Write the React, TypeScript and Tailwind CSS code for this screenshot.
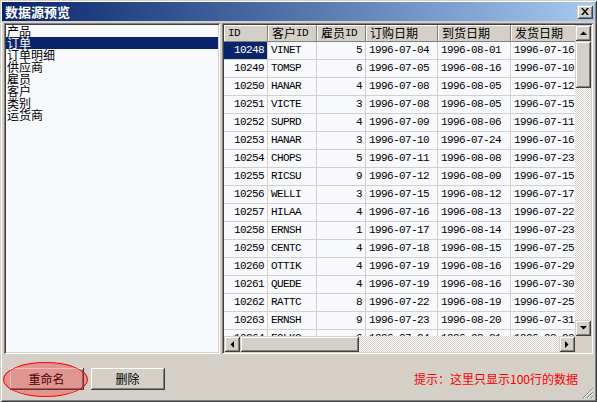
import React from 'react';

const raised = "shadow-[inset_1px_1px_#d4d0c8,inset_-1px_-1px_#404040,inset_2px_2px_#ffffff,inset_-2px_-2px_#808080]";
const sunken = "shadow-[inset_1px_1px_#808080,inset_-1px_-1px_#ffffff,inset_2px_2px_#404040,inset_-2px_-2px_#d4d0c8]";
const checker = "bg-[repeating-conic-gradient(#d4d0c8_0_25%,#ffffff_0_50%)] bg-[length:2px_2px]";

const cjk = { fontFamily: '"Noto Sans CJK SC", "Liberation Sans", sans-serif' };
const mono = { fontFamily: '"Liberation Mono", "Noto Sans CJK SC", monospace' };

const tables = ["产品", "订单", "订单明细", "供应商", "雇员", "客户", "类别", "运货商"];

const rows: [string, string, string, string, string, string][] = [
    ["10248", "VINET", "5", "1996-07-04", "1996-08-01", "1996-07-16"],
    ["10249", "TOMSP", "6", "1996-07-05", "1996-08-16", "1996-07-10"],
    ["10250", "HANAR", "4", "1996-07-08", "1996-08-05", "1996-07-12"],
    ["10251", "VICTE", "3", "1996-07-08", "1996-08-05", "1996-07-15"],
    ["10252", "SUPRD", "4", "1996-07-09", "1996-08-06", "1996-07-11"],
    ["10253", "HANAR", "3", "1996-07-10", "1996-07-24", "1996-07-16"],
    ["10254", "CHOPS", "5", "1996-07-11", "1996-08-08", "1996-07-23"],
    ["10255", "RICSU", "9", "1996-07-12", "1996-08-09", "1996-07-15"],
    ["10256", "WELLI", "3", "1996-07-15", "1996-08-12", "1996-07-17"],
    ["10257", "HILAA", "4", "1996-07-16", "1996-08-13", "1996-07-22"],
    ["10258", "ERNSH", "1", "1996-07-17", "1996-08-14", "1996-07-23"],
    ["10259", "CENTC", "4", "1996-07-18", "1996-08-15", "1996-07-25"],
    ["10260", "OTTIK", "4", "1996-07-19", "1996-08-16", "1996-07-29"],
    ["10261", "QUEDE", "4", "1996-07-19", "1996-08-16", "1996-07-30"],
    ["10262", "RATTC", "8", "1996-07-22", "1996-08-19", "1996-07-25"],
    ["10263", "ERNSH", "9", "1996-07-23", "1996-08-20", "1996-07-31"],
    ["10264", "FOLKO", "6", "1996-07-24", "1996-08-21", "1996-08-23"],
];

function Arrow({ dir }: { dir: "up" | "down" | "left" | "right" }) {
    const pts = {
        up: "0,4 7,4 3.5,0.5",
        down: "0,0 7,0 3.5,3.5",
        left: "4,0 4,7 0.5,3.5",
        right: "0,0 0,7 3.5,3.5",
    }[dir];
    const vertical = dir === "up" || dir === "down";
    return (
        <div className={`w-[16px] h-[16px] shrink-0 bg-[#d4d0c8] flex items-center justify-center ${raised}`}>
            <svg width={vertical ? 7 : 4} height={vertical ? 4 : 7}>
                <polygon points={pts} fill="#000" />
            </svg>
        </div>
    );
}

function HeaderCell({ w, children }: { w: string; children: React.ReactNode }) {
    return (
        <div className={`${w} shrink-0 h-[17px] pl-[4px] flex items-center bg-[#d4d0c8] border-r border-b border-[#808080] shadow-[inset_1px_1px_#ffffff] text-black`}>
            {children}
        </div>
    );
}

export default function App() {
    return (
        <div className="relative w-[597px] h-[402px] bg-[#d4d0c8] p-[2px] flex flex-col shadow-[inset_1px_1px_#d4d0c8,inset_-1px_-1px_#404040,inset_2px_2px_#ffffff,inset_-2px_-2px_#808080] overflow-hidden">
            {/* title bar */}
            <div className="h-[19px] shrink-0 flex items-center justify-between pl-[3px] pr-[2px] bg-linear-to-r from-[#0a246a] to-[#a6caf0]">
                <span className="text-white font-bold text-[13px] leading-none" style={cjk}>数据源预览</span>
                <div className={`w-[16px] h-[14px] bg-[#d4d0c8] flex items-center justify-center ${raised}`}>
                    <svg width="8" height="7" viewBox="0 0 8 7">
                        <path d="M0 0h2l2 2.5L6 0h2L5 3.5 8 7H6L4 4.5 2 7H0l3-3.5z" fill="#000" />
                    </svg>
                </div>
            </div>

            {/* body */}
            <div className="h-[333px] shrink-0 flex gap-[2px] px-[2px] pt-[2px]">
                {/* table list */}
                <div className={`w-[216px] h-[331px] bg-[#f8f9fc] p-[2px] ${sunken}`}>
                    {tables.map((t, i) => (
                        <div
                            key={t}
                            className={`h-[12px] leading-[12px] pl-[1px] text-[12px] whitespace-nowrap ${i === 1 ? "bg-[#0a246a] text-white" : "text-black"}`}
                            style={cjk}
                        >
                            {t}
                        </div>
                    ))}
                </div>

                {/* data grid */}
                <div className={`flex-1 h-[331px] p-[2px] bg-[#d4d0c8] flex flex-col ${sunken}`}>
                    <div className="flex h-[311px]">
                        <div className="w-[351px] h-[311px] overflow-hidden bg-[#f8f9fc] text-[11px] tracking-[-0.6px]" style={mono}>
                            <div className="flex w-[400px]">
                                <HeaderCell w="w-[44px]">ID</HeaderCell>
                                <HeaderCell w="w-[49px]"><span className="text-[12px] tracking-normal" style={cjk}>客户</span>ID</HeaderCell>
                                <HeaderCell w="w-[49px]"><span className="text-[12px] tracking-normal" style={cjk}>雇员</span>ID</HeaderCell>
                                <HeaderCell w="w-[72px]"><span className="text-[12px] tracking-normal" style={cjk}>订购日期</span></HeaderCell>
                                <HeaderCell w="w-[73px]"><span className="text-[12px] tracking-normal" style={cjk}>到货日期</span></HeaderCell>
                                <HeaderCell w="w-[73px]"><span className="text-[12px] tracking-normal" style={cjk}>发货日期</span></HeaderCell>
                            </div>
                            {rows.map((r, i) => (
                                <div key={r[0]} className="flex w-[400px] h-[18px] text-black">
                                    <div className={`w-[44px] shrink-0 pr-[3px] flex items-center justify-end border-r border-b border-[#d4d0c8] ${i === 0 ? "bg-[#0a246a] text-white" : ""}`}>{r[0]}</div>
                                    <div className="w-[49px] shrink-0 pl-[3px] flex items-center border-r border-b border-[#d4d0c8]">{r[1]}</div>
                                    <div className="w-[49px] shrink-0 pr-[3px] flex items-center justify-end border-r border-b border-[#d4d0c8]">{r[2]}</div>
                                    <div className="w-[72px] shrink-0 pl-[3px] flex items-center border-r border-b border-[#d4d0c8]">{r[3]}</div>
                                    <div className="w-[73px] shrink-0 pl-[3px] flex items-center border-r border-b border-[#d4d0c8]">{r[4]}</div>
                                    <div className="w-[73px] shrink-0 pl-[3px] flex items-center border-r border-b border-[#d4d0c8]">{r[5]}</div>
                                </div>
                            ))}
                        </div>
                        {/* vertical scrollbar */}
                        <div className="w-[16px] flex flex-col">
                            <Arrow dir="up" />
                            <div className={`h-[47px] shrink-0 bg-[#d4d0c8] ${raised}`} />
                            <div className={`flex-1 ${checker}`} />
                            <Arrow dir="down" />
                        </div>
                    </div>
                    {/* horizontal scrollbar */}
                    <div className="flex h-[16px]">
                        <Arrow dir="left" />
                        <div className={`w-[119px] shrink-0 bg-[#d4d0c8] ${raised}`} />
                        <div className={`flex-1 ${checker}`} />
                        <Arrow dir="right" />
                        <div className="w-[16px] shrink-0 bg-[#d4d0c8]" />
                    </div>
                </div>
            </div>

            {/* footer */}
            <div className="flex-1 flex items-start justify-between pt-[13px] pl-[7px] pr-[17px]">
                <div className="flex gap-[6px]">
                    <button className={`w-[75px] h-[23px] bg-[#d4d0c8] text-[12px] text-black ${raised}`} style={cjk}>重命名</button>
                    <button className={`w-[75px] h-[23px] bg-[#d4d0c8] text-[12px] text-black ${raised}`} style={cjk}>删除</button>
                </div>
                <span className="h-[23px] flex items-center text-[12px] text-[#ff0000]" style={cjk}>
                    提示：这里只显示100行的数据
                </span>
            </div>

            {/* red highlight around rename button */}
            <div className="absolute left-[3px] top-[362px] w-[85px] h-[35px] rounded-[50%] border border-[#ff0000] bg-[rgba(255,0,0,0.28)]" />

            {/* size grip */}
            <svg className="absolute right-[3px] bottom-[3px]" width="12" height="12" viewBox="0 0 12 12">
                <path d="M11 1L1 11M11 5L5 11M11 9L9 11" stroke="#808080" strokeWidth="1" />
                <path d="M11 2L2 11M11 6L6 11M11 10L10 11" stroke="#ffffff" strokeWidth="1" />
            </svg>
        </div>
    );
}
